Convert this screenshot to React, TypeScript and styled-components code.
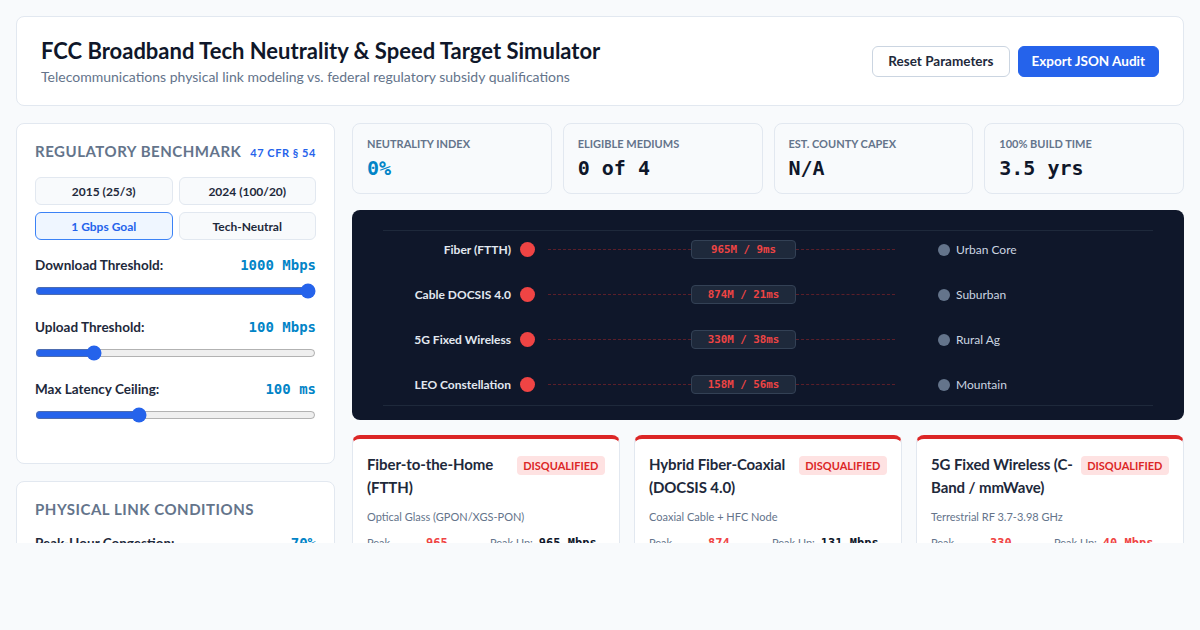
import styled, { createGlobalStyle } from 'styled-components';

const GlobalStyle = createGlobalStyle`
  * { box-sizing: border-box; }
  body {
    margin: 0;
    background: #f8fafc;
    font-family: Lato, "Noto Sans", sans-serif;
    color: #1e293b;
  }
`;

const mono = `"DejaVu Sans Mono", "Liberation Mono", monospace`;

// Page frame
const Page = styled.div`
  padding: 16px;
  display: flex;
  flex-direction: column;
  gap: 17px;
`;

// Header
const Header = styled.header`
  background: #fff;
  border: 1px solid #e2e8f0;
  border-radius: 8px;
  height: 90px;
  padding: 0 24px;
  display: flex;
  align-items: center;
  justify-content: space-between;
`;

const Title = styled.h1`
  margin: 0;
  font-size: 22px;
  font-weight: 700;
  color: #0f172a;
  line-height: 28px;
`;

const Subtitle = styled.p`
  margin: 3px 0 0;
  font-size: 14px;
  color: #64748b;
`;

const Actions = styled.div`
  display: flex;
  gap: 8px;
`;

const HeaderButton = styled.button<{ $primary?: boolean }>`
  height: 31px;
  padding: 0 ${(p) => (p.$primary ? 13 : 15)}px;
  border-radius: 6px;
  font-family: inherit;
  font-size: 13.5px;
  font-weight: 700;
  cursor: pointer;
  border: 1px solid ${(p) => (p.$primary ? '#2563eb' : '#cbd5e1')};
  background: ${(p) => (p.$primary ? '#2563eb' : '#fff')};
  color: ${(p) => (p.$primary ? '#fff' : '#1e293b')};
`;

// Body grid, clipped like the source viewport
const Body = styled.div`
  height: 420px;
  overflow: hidden;
  display: grid;
  grid-template-columns: 319px 1fr;
  gap: 17px;
  align-items: start;
`;

const Sidebar = styled.div`
  display: flex;
  flex-direction: column;
  gap: 17px;
`;

const Panel = styled.section<{ $height?: number }>`
  background: #fff;
  border: 1px solid #e2e8f0;
  border-radius: 8px;
  padding: 18px 18px 0;
  height: ${(p) => (p.$height ? `${p.$height}px` : 'auto')};
`;

const PanelHead = styled.div`
  display: flex;
  align-items: baseline;
  justify-content: space-between;
  margin-bottom: 17px;
`;

const PanelTitle = styled.h2`
  margin: 0;
  font-size: 15px;
  font-weight: 700;
  letter-spacing: 0.035em;
  text-transform: uppercase;
  color: #64748b;
`;

const Citation = styled.span`
  font-size: 11px;
  font-weight: 700;
  letter-spacing: 0.05em;
  color: #2563eb;
`;

const PresetGrid = styled.div`
  display: grid;
  grid-template-columns: 1fr 1fr;
  grid-auto-rows: 28px;
  gap: 7px 6px;
  margin-top: 1px;
  margin-bottom: 17px;
`;

const Preset = styled.button<{ $active?: boolean }>`
  height: 28px;
  border-radius: 6px;
  font-family: inherit;
  font-size: 12px;
  font-weight: 700;
  border: 1px solid ${(p) => (p.$active ? '#3b82f6' : '#e2e8f0')};
  background: ${(p) => (p.$active ? '#eff6ff' : '#f8fafc')};
  color: ${(p) => (p.$active ? '#2563eb' : '#1e293b')};
`;

const Field = styled.div`
  margin-bottom: 20px;
`;

const FieldHead = styled.div`
  display: flex;
  justify-content: space-between;
  align-items: baseline;
`;

const FieldLabel = styled.span`
  font-size: 13.5px;
  font-weight: 700;
  color: #1e293b;
`;

const FieldValue = styled.span`
  font-family: ${mono};
  font-size: 14px;
  font-weight: 700;
  color: #0284c7;
`;

const Range = styled.input`
  width: 100%;
  margin: 10px 0 0;
  accent-color: #2563eb;
  display: block;
`;

// Right column
const Main = styled.div`
  display: flex;
  flex-direction: column;
  gap: 16px;
`;

const Stats = styled.div`
  display: grid;
  grid-template-columns: repeat(4, 1fr);
  gap: 11px;
`;

const Stat = styled.div`
  background: #f8fafc;
  border: 1px solid #e2e8f0;
  border-radius: 8px;
  height: 71px;
  padding: 13px 14px 0;
`;

const StatLabel = styled.div`
  font-size: 11px;
  font-weight: 700;
  text-transform: uppercase;
  color: #64748b;
`;

const StatValue = styled.div<{ $accent?: boolean }>`
  margin-top: 6px;
  font-family: ${mono};
  font-size: 20px;
  font-weight: 700;
  color: ${(p) => (p.$accent ? '#0284c7' : '#0f172a')};
`;

// Dark topology diagram
const Diagram = styled.div`
  background: #0f172a;
  border-radius: 8px;
  height: 210px;
  padding: 20px 31px 0;
`;

const DiagramFrame = styled.div`
  border-top: 1px solid #1e293b;
  border-bottom: 1px solid #1e293b;
  height: 176px;
  display: flex;
  flex-direction: column;
  gap: 8px;
`;

const Link = styled.div`
  display: grid;
  grid-template-columns: 128px 32px 148px 105px 99px 61px 1fr;
  align-items: center;
  height: 37px;
`;

const MediumName = styled.span`
  text-align: right;
  font-size: 12px;
  font-weight: 700;
  color: #e2e8f0;
`;

const Dot = styled.span<{ $color: string; $size: number; $end?: boolean }>`
  justify-self: ${(p) => (p.$end ? 'end' : 'center')};
  margin-right: ${(p) => (p.$end ? 6 : 0)}px;
  width: ${(p) => p.$size}px;
  height: ${(p) => p.$size}px;
  border-radius: 50%;
  background: ${(p) => p.$color};
`;

const Dash = styled.span<{ $inset?: string }>`
  height: 0;
  border-top: 1px dashed #5b1f2a;
  margin: ${(p) => p.$inset ?? '0'};
`;

const Spec = styled.span`
  height: 19px;
  border-radius: 4px;
  background: #1e293b;
  border: 1px solid #334155;
  display: flex;
  align-items: center;
  justify-content: center;
  font-family: ${mono};
  font-size: 10.8px;
  font-weight: 700;
  color: #ef4444;
`;

const Region = styled.span`
  font-size: 12px;
  color: #cbd5e1;
`;

// Technology cards
const Cards = styled.div`
  display: grid;
  grid-template-columns: repeat(3, 1fr);
  gap: 14px;
  margin-top: -1px;
`;

const TechCard = styled.article`
  background: #fff;
  border: 1px solid #e2e8f0;
  border-top: 4px solid #dc2626;
  border-radius: 8px;
  padding: 14px 14px 0;
  height: 130px;
`;

const CardHead = styled.div`
  display: flex;
  justify-content: space-between;
  align-items: flex-start;
  gap: 4px;
`;

const CardTitle = styled.h3`
  margin: 0;
  font-size: 15px;
  font-weight: 700;
  line-height: 23px;
  letter-spacing: -0.1px;
  color: #1e293b;
`;

const Verdict = styled.span`
  flex-shrink: 0;
  margin-top: 3px;
  padding: 3px 6.5px;
  border-radius: 4px;
  background: #fee2e2;
  color: #dc2626;
  font-size: 11px;
  font-weight: 700;
`;

const Medium = styled.div`
  margin-top: 11px;
  font-size: 11px;
  color: #64748b;
`;

const Metrics = styled.div`
  margin-top: 13px;
  display: grid;
  grid-template-columns: 1fr 1fr;
  gap: 8px;
`;

const Metric = styled.div`
  display: flex;
  gap: 6px;
  font-size: 11px;
  color: #64748b;
`;

const MetricLabel = styled.span<{ $width?: number }>`
  flex-shrink: 0;
  width: ${(p) => (p.$width ? `${p.$width}px` : 'auto')};
`;

const MetricValue = styled.span<{ $bad?: boolean }>`
  font-family: ${mono};
  font-weight: 700;
  font-size: 12px;
  color: ${(p) => (p.$bad ? '#ef4444' : '#0f172a')};
`;

const links = [
  { name: 'Fiber (FTTH)', spec: '965M / 9ms', region: 'Urban Core' },
  { name: 'Cable DOCSIS 4.0', spec: '874M / 21ms', region: 'Suburban' },
  { name: '5G Fixed Wireless', spec: '330M / 38ms', region: 'Rural Ag' },
  { name: 'LEO Constellation', spec: '158M / 56ms', region: 'Mountain' },
];

const techs = [
  { title: 'Fiber-to-the-Home (FTTH)', medium: 'Optical Glass (GPON/XGS-PON)', down: '965', up: '965 Mbps', upBad: false },
  { title: 'Hybrid Fiber-Coaxial (DOCSIS 4.0)', medium: 'Coaxial Cable + HFC Node', down: '874', up: '131 Mbps', upBad: false },
  { title: '5G Fixed Wireless (C-Band / mmWave)', medium: 'Terrestrial RF 3.7-3.98 GHz', down: '330', up: '40 Mbps', upBad: true },
];

export default function App() {
  return (
    <>
      <GlobalStyle />
      <Page>
        <Header>
          <div>
            <Title>FCC Broadband Tech Neutrality &amp; Speed Target Simulator</Title>
            <Subtitle>Telecommunications physical link modeling vs. federal regulatory subsidy qualifications</Subtitle>
          </div>
          <Actions>
            <HeaderButton>Reset Parameters</HeaderButton>
            <HeaderButton $primary>Export JSON Audit</HeaderButton>
          </Actions>
        </Header>

        <Body>
          <Sidebar>
            <Panel $height={341}>
              <PanelHead>
                <PanelTitle>Regulatory Benchmark</PanelTitle>
                <Citation>47 CFR § 54</Citation>
              </PanelHead>
              <PresetGrid>
                <Preset>2015 (25/3)</Preset>
                <Preset>2024 (100/20)</Preset>
                <Preset $active>1 Gbps Goal</Preset>
                <Preset>Tech-Neutral</Preset>
              </PresetGrid>
              <Field>
                <FieldHead>
                  <FieldLabel>Download Threshold:</FieldLabel>
                  <FieldValue>1000 Mbps</FieldValue>
                </FieldHead>
                <Range type="range" min={0} max={1000} defaultValue={1000} />
              </Field>
              <Field>
                <FieldHead>
                  <FieldLabel>Upload Threshold:</FieldLabel>
                  <FieldValue>100 Mbps</FieldValue>
                </FieldHead>
                <Range type="range" min={0} max={500} defaultValue={97} />
              </Field>
              <Field>
                <FieldHead>
                  <FieldLabel>Max Latency Ceiling:</FieldLabel>
                  <FieldValue>100 ms</FieldValue>
                </FieldHead>
                <Range type="range" min={0} max={270} defaultValue={98} />
              </Field>
            </Panel>

            <Panel>
              <PanelHead>
                <PanelTitle>Physical Link Conditions</PanelTitle>
              </PanelHead>
              <Field>
                <FieldHead>
                  <FieldLabel>Peak-Hour Congestion:</FieldLabel>
                  <FieldValue>70%</FieldValue>
                </FieldHead>
                <Range type="range" min={0} max={100} defaultValue={70} />
              </Field>
            </Panel>
          </Sidebar>

          <Main>
            <Stats>
              <Stat>
                <StatLabel>Neutrality Index</StatLabel>
                <StatValue $accent>0%</StatValue>
              </Stat>
              <Stat>
                <StatLabel>Eligible Mediums</StatLabel>
                <StatValue>0 of 4</StatValue>
              </Stat>
              <Stat>
                <StatLabel>Est. County Capex</StatLabel>
                <StatValue>N/A</StatValue>
              </Stat>
              <Stat>
                <StatLabel>100% Build Time</StatLabel>
                <StatValue>3.5 yrs</StatValue>
              </Stat>
            </Stats>

            <Diagram>
              <DiagramFrame>
                {links.map((l) => (
                  <Link key={l.name}>
                    <MediumName>{l.name}</MediumName>
                    <Dot $color="#ef4444" $size={15} />
                    <Dash $inset="0 0 0 5px" />
                    <Spec>{l.spec}</Spec>
                    <Dash />
                    <Dot $color="#64748b" $size={12} $end />
                    <Region>{l.region}</Region>
                  </Link>
                ))}
              </DiagramFrame>
            </Diagram>

            <Cards>
              {techs.map((t) => (
                <TechCard key={t.title}>
                  <CardHead>
                    <CardTitle>{t.title}</CardTitle>
                    <Verdict>DISQUALIFIED</Verdict>
                  </CardHead>
                  <Medium>{t.medium}</Medium>
                  <Metrics>
                    <Metric>
                      <MetricLabel $width={53}>Peak Down:</MetricLabel>
                      <MetricValue $bad>{t.down} Mbps</MetricValue>
                    </Metric>
                    <Metric>
                      <MetricLabel>Peak Up:</MetricLabel>
                      <MetricValue $bad={t.upBad}>{t.up}</MetricValue>
                    </Metric>
                  </Metrics>
                </TechCard>
              ))}
            </Cards>
          </Main>
        </Body>
      </Page>
    </>
  );
}
